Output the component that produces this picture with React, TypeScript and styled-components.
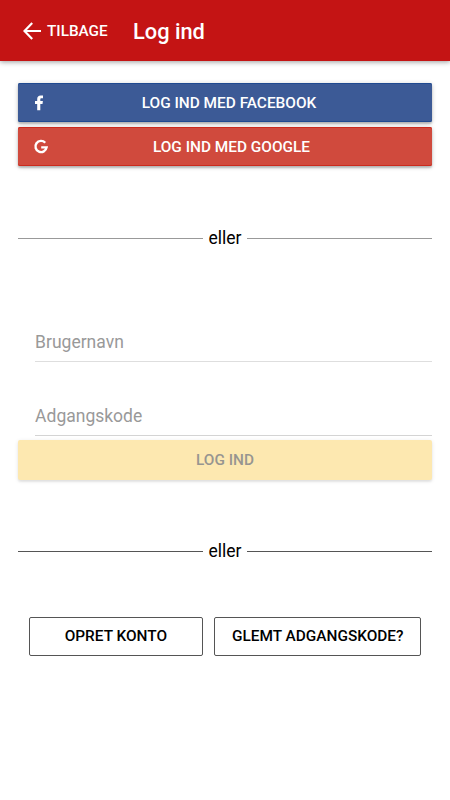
import React from "react";
import styled, { createGlobalStyle } from "styled-components";

const GlobalStyle = createGlobalStyle`
  * { box-sizing: border-box; }
  body {
    margin: 0;
    background: #fff;
    color: #000;
    font-family: Roboto, "Liberation Sans", sans-serif;
  }
  button, input { font-family: inherit; margin: 0; }
`;

const Page = styled.div`
  min-height: 800px;
  background: #fff;
`;

const Header = styled.header`
  display: flex;
  align-items: center;
  height: 61px;
  padding-left: 23px;
  background: #c41414;
  color: #fff;
  box-shadow: 0 1px 5px rgba(0, 0, 0, 0.4);
`;

const BackButton = styled.button`
  display: flex;
  align-items: center;
  gap: 6px;
  width: 110px;
  padding: 0;
  border: 0;
  background: none;
  color: inherit;
  font-size: 15.3px;
  font-weight: 500;
  line-height: 20px;
  white-space: nowrap;
`;

const Title = styled.h1`
  margin: 0;
  padding-top: 2px;
  font-size: 21.8px;
  font-weight: 500;
  line-height: 26px;
`;

const Content = styled.main`
  display: flex;
  flex-direction: column;
  padding: 22px 17.6px 0;
`;

const BlockButton = styled.button<{ $color: string; $edge: string }>`
  display: grid;
  grid-template-columns: 44px 1fr 36px;
  align-items: center;
  height: 39.4px;
  padding: 0;
  border: 0;
  border-radius: 2px;
  background: ${(p) => p.$color};
  color: #fff;
  font-size: 15.4px;
  font-weight: 500;
  box-shadow: 0 2px 2px rgba(0, 0, 0, 0.2), 0 1px 5px rgba(0, 0, 0, 0.2),
    inset 0 1px 0 ${(p) => p.$edge}, inset 0 -1px 0 ${(p) => p.$edge};
  & + & {
    grid-template-columns: 44px 1fr 31px;
    margin-top: 4.4px;
    padding-top: 1px;
  }
  svg { margin-left: 15.4px; }
`;

const LoginButton = styled.button`
  height: 39.4px;
  margin-top: 4.6px;
  padding: 0;
  border: 0;
  border-radius: 2px;
  background: #fde8b0;
  color: #979590;
  font-size: 15.35px;
  font-weight: 500;
  box-shadow: 0 2px 2px rgba(0, 0, 0, 0.06), 0 1px 4px rgba(0, 0, 0, 0.1);
`;

const Divider = styled.div<{ $top: number; $line: string }>`
  display: flex;
  align-items: center;
  gap: 5.6px;
  height: 24px;
  margin-top: ${(p) => p.$top}px;
  font-size: 17.5px;
  line-height: 24px;
  &::before, &::after {
    content: "";
    flex: 1;
    height: 1px;
    margin-top: 1px;
    background: ${(p) => p.$line};
  }
`;

const Fields = styled.div`
  display: flex;
  flex-direction: column;
  gap: 35px;
  margin-top: 72.6px;
  padding-left: 17.5px;
`;

const Field = styled.input<{ $line: string }>`
  width: 100%;
  height: 39px;
  padding: 0;
  border: 0;
  border-bottom: 1px solid ${(p) => p.$line};
  border-radius: 0;
  background: none;
  font-size: 17.5px;
  outline: 0;
  &::placeholder { color: #999; opacity: 1; }
`;

const Actions = styled.div`
  display: flex;
  gap: 11px;
  margin: 53.4px 11px 0;
`;

const OutlineButton = styled.button<{ $width: number }>`
  width: ${(p) => p.$width}px;
  height: 39.4px;
  padding: 0;
  border: 1px solid #555;
  border-radius: 2px;
  background: #fff;
  color: #000;
  font-size: 15.4px;
  font-weight: 500;
  white-space: nowrap;
`;

const BackArrow = () => (
  <svg width="18" height="18" viewBox="0 0 18 18" fill="none" stroke="#fff" strokeWidth="2.2">
    <path d="M9.2 1.1 1.5 9l7.7 7.9M1.5 9H18" />
  </svg>
);

const FacebookMark = () => (
  <svg width="12" height="16" viewBox="0 0 12 16" fill="#fff">
    <path d="M10 .6v2.6H8.6C7.6 3.2 7.3 3.7 7.3 4.5v1.6h2.600L9.500 8.900H7.300V15.200H4.200V8.900H2V6.100h2.200V4.100C4.200 1.900 5.500 .6 7.600 .6Z" />
  </svg>
);

const GoogleMark = () => (
  <svg width="16" height="16" viewBox="0 0 16 16" fill="none" stroke="#fff" strokeWidth="2.4">
    <path d="M12.200 3.700A5.600 5.600 0 1 0 13.600 8.400H8.200" />
  </svg>
);

export default function App() {
  return (
    <>
      <GlobalStyle />
      <Page>
        <Header>
          <BackButton>
            <BackArrow />
            TILBAGE
          </BackButton>
          <Title>Log ind</Title>
        </Header>
        <Content>
          <BlockButton $color="#3c5a96" $edge="#204a91">
            <FacebookMark />
            <span>LOG IND MED FACEBOOK</span>
          </BlockButton>
          <BlockButton $color="#d04a3d" $edge="#cb2a1d">
            <GoogleMark />
            <span>LOG IND MED GOOGLE</span>
          </BlockButton>
          <Divider $top={60} $line="#999">eller</Divider>
          <Fields>
            <Field $line="#dedede" placeholder="Brugernavn" aria-label="Brugernavn" />
            <Field $line="#d4d4d4" type="password" placeholder="Adgangskode" aria-label="Adgangskode" />
          </Fields>
          <LoginButton>LOG IND</LoginButton>
          <Divider $top={59.4} $line="#555">eller</Divider>
          <Actions>
            <OutlineButton $width={174.8}>OPRET KONTO</OutlineButton>
            <OutlineButton $width={207.6}>GLEMT ADGANGSKODE?</OutlineButton>
          </Actions>
        </Content>
      </Page>
    </>
  );
}
